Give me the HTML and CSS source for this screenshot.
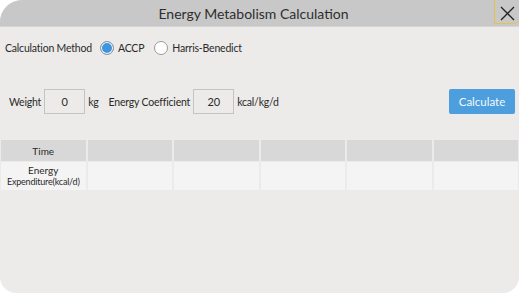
FILE: index.html
```html
<!DOCTYPE html>
<html>
<head>
<meta charset="utf-8">
<link rel="stylesheet" href="styles.css">
</head>
<body>
<div class="dialog">
  <div class="titlebar">
    <div class="title">Energy Metabolism Calculation</div>
    <div class="close">
      <svg width="15" height="15" viewBox="0 0 15 15"><path d="M1 1 L14 14 M14 1 L1 14" stroke="#222" stroke-width="1.3" fill="none"/></svg>
    </div>
  </div>
  <div class="method-row">
    <span class="label">Calculation Method</span>
    <label class="radio"><span class="dot checked"></span><span>ACCP</span></label>
    <label class="radio"><span class="dot"></span><span>Harris-Benedict</span></label>
  </div>
  <div class="input-row">
    <span class="label">Weight</span>
    <span class="box">0</span>
    <span class="unit">kg</span>
    <span class="label coef">Energy Coefficient</span>
    <span class="box">20</span>
    <span class="unit">kcal/kg/d</span>
    <span class="spacer"></span>
    <button class="calc">Calculate</button>
  </div>
  <div class="table">
    <div class="cell head">Time</div>
    <div class="cell head"></div>
    <div class="cell head"></div>
    <div class="cell head"></div>
    <div class="cell head"></div>
    <div class="cell head"></div>
    <div class="cell data first"><span class="l1">Energy</span><span class="l2">Expenditure(kcal/d)</span></div>
    <div class="cell data"></div>
    <div class="cell data"></div>
    <div class="cell data"></div>
    <div class="cell data"></div>
    <div class="cell data"></div>
  </div>
</div>
</body>
</html>
```
FILE: styles.css
```css
html, body {
  margin: 0;
  padding: 0;
  background: #ffffff;
}
body {
  font-family: Lato, "Noto Sans", sans-serif;
  color: #2a2a2a;
}
.dialog {
  width: 519px;
  height: 293px;
  background: #ecebe9;
  border-radius: 22px 0 16px 16px;
  overflow: hidden;
  box-sizing: border-box;
}
.titlebar {
  height: 26px;
  background: #c8c8c8;
  display: flex;
  align-items: center;
  justify-content: center;
  position: relative;
  border-bottom: 1px solid #d6d6d6;
}
.title {
  font-size: 14px;
  color: #2e2e2e;
  margin-left: -12px;
}
.close {
  position: absolute;
  right: 0;
  top: 0;
  width: 24px;
  height: 23px;
  border-left: 1px solid #e6c24a;
  border-bottom: 1px solid #e6c24a;
  border-bottom-right-radius: 5px;
  display: flex;
  align-items: center;
  justify-content: center;
}
.close svg { margin-top: 3px; }
.method-row {
  display: flex;
  align-items: center;
  height: 20px;
  margin-top: 11px;
  padding-left: 5px;
  font-size: 10.5px;
  letter-spacing: -0.2px;
}
.radio {
  display: flex;
  align-items: center;
  gap: 4px;
  margin-left: 8px;
}
.radio + .radio { margin-left: 10px; }
.dot {
  width: 12px;
  height: 12px;
  border: 1px solid #9a9a9a;
  border-radius: 50%;
  background: #ffffff;
  box-sizing: content-box;
}
.dot.checked {
  background: #3f95db;
  box-shadow: inset 0 0 0 1px #ffffff;
}
.input-row {
  display: flex;
  align-items: center;
  margin-top: 31px;
  padding-left: 9px;
  padding-right: 4px;
  font-size: 10.5px;
  letter-spacing: -0.2px;
}
.box {
  width: 41px;
  height: 25px;
  border: 1px solid #c4c4c4;
  box-sizing: border-box;
  display: flex;
  align-items: center;
  justify-content: center;
  margin-left: 3px;
  background: #ecebe9;
  font-size: 11px;
}
.unit { margin-left: 3px; }
.coef { margin-left: 10px; }
.spacer { flex: 1; }
.calc {
  width: 66px;
  height: 25px;
  border: none;
  border-radius: 2px;
  background: #4c9edc;
  color: #f4f8fc;
  font-family: Lato, "Noto Sans", sans-serif;
  font-size: 11.5px;
  padding: 0;
}
.table {
  margin: 26px 1px 0 1px;
  display: grid;
  grid-template-columns: repeat(6, 1fr);
  grid-template-rows: 21px 28px;
  gap: 1px 2px;
  background: #ecebe9;
}
.cell {
  display: flex;
  flex-direction: column;
  align-items: center;
  justify-content: center;
  font-size: 10px;
}
.head { background: #d8d8d8; }
.data { background: #f4f4f4; }
.l1 { font-size: 10px; line-height: 11px; }
.l2 { font-size: 9px; line-height: 11px; letter-spacing: -0.2px; }
```
